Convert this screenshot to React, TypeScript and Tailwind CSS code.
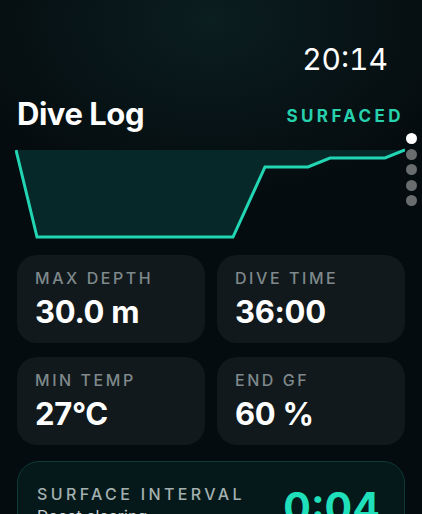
const STATS = [
  { label: 'MAX DEPTH', value: '30.0 m' },
  { label: 'DIVE TIME', value: '36:00' },
  { label: 'MIN TEMP', value: '27°C' },
  { label: 'END GF', value: '60 %' },
];

// depth profile in chart coords (390 x 92)
const PROFILE = 'M1 2 L22 89 L218 89 L250 19 L293 19 L315 10 L370 10 L390 2';

export default function App() {
  return (
    <div
      className="relative h-[514px] w-[422px] overflow-hidden bg-[#050c0f] text-white"
      style={{ fontFamily: 'Inter, "Noto Sans", sans-serif' }}
    >
      <div className="pointer-events-none absolute -top-40 left-1/2 h-[360px] w-[520px] -translate-x-1/2 rounded-full bg-[radial-gradient(closest-side,rgba(16,44,46,0.55),transparent)]" />

      {/* page dots */}
      <div className="absolute right-[5px] top-[133px] flex flex-col gap-[4.5px]">
        <div className="h-[11px] w-[11px] rounded-full bg-white" />
        {[0, 1, 2, 3].map((i) => (
          <div key={i} className="h-[11px] w-[11px] rounded-full bg-[#6a6d6e]" />
        ))}
      </div>

      <div className="relative px-[17px]">
        <div className="flex justify-end pr-[17px] pt-[39px] text-[30px] leading-[40px] tabular-nums">20:14</div>

        <div className="mt-[17px] flex items-end justify-between pr-[1px]">
          <h1 className="text-[31px] font-bold leading-[36px] tracking-[-0.015em]">Dive Log</h1>
          <span className="mb-[6px] text-[17px] font-bold leading-[20px] tracking-[0.2em] text-[#27d1ad]">SURFACED</span>
        </div>

        <svg viewBox="0 0 390 92" className="-ml-[2px] mt-[16px] block h-[92px] w-[390px]">
          <path d={`${PROFILE} Z`} fill="#062828" />
          <path d={PROFILE} fill="none" stroke="#22d6b4" strokeWidth="3" strokeLinejoin="miter" />
        </svg>

        <div className="mt-[15px] grid grid-cols-2 gap-x-[12px] gap-y-[14px]">
          {STATS.map((s) => (
            <div key={s.label} className="h-[88px] rounded-[20px] bg-[#11191c] px-[18px] pt-[14px]">
              <div className="text-[16px] font-medium leading-[19px] tracking-[0.16em] text-[#7f898c]">{s.label}</div>
              <div className="mt-[6px] text-[31px] font-bold leading-[36px] tracking-[-0.01em]">{s.value}</div>
            </div>
          ))}
        </div>

        <div className="mt-[16px] flex h-[110px] justify-between rounded-[22px] border border-[#0e3b34] bg-[#06191a] pl-[19px] pr-[24px] pt-[23px]">
          <div>
            <div className="text-[16px] font-medium leading-[19px] tracking-[0.21em] text-[#a3b0b0]">SURFACE INTERVAL</div>
            <div className="mt-[2px] text-[16px] leading-[20px] text-[#c6d0d0]">Decot clearing</div>
          </div>
          <div className="-mt-[3px] text-[41px] font-bold leading-[50px] text-[#1fe0bb]">0:04</div>
        </div>
      </div>
    </div>
  );
}
